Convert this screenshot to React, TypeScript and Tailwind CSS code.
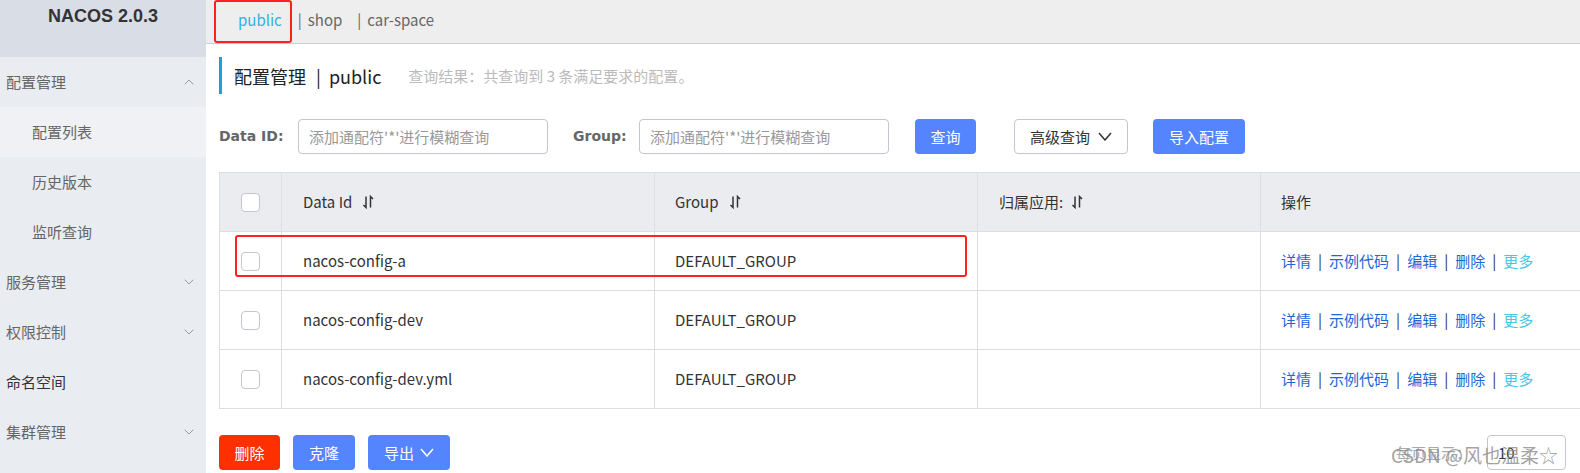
import { ChevronDown, ChevronUp } from "lucide-react"

const rows = [
  { id: "nacos-config-a", group: "DEFAULT_GROUP" },
  { id: "nacos-config-dev", group: "DEFAULT_GROUP" },
  { id: "nacos-config-dev.yml", group: "DEFAULT_GROUP" },
]

const menu = [
  { label: "配置管理", icon: "up" },
  { label: "配置列表", sub: true, active: true },
  { label: "历史版本", sub: true },
  { label: "监听查询", sub: true },
  { label: "服务管理", icon: "down" },
  { label: "权限控制", icon: "down" },
  { label: "命名空间", dark: true },
  { label: "集群管理", icon: "down" },
]

function SortIcon() {
  return (
    <svg width="13" height="14" viewBox="0 0 13 14" className="ml-[10px]" fill="none" stroke="#333" strokeWidth="1.5">
      <path d="M4 1.5 V12.5 L1.5 10" />
      <path d="M8.5 12.5 V1.5 L11 4" />
    </svg>
  )
}

function Caret({ color = "#333" }: { color?: string }) {
  return (
    <svg width="14" height="9" viewBox="0 0 14 9" fill="none" stroke={color} strokeWidth="1.5">
      <path d="M1 1 L7 8 L13 1" />
    </svg>
  )
}

function Checkbox() {
  return <div className="w-[19px] h-[19px] rounded-[4px] border border-[#c4c6cf] bg-white mx-auto" />
}

export default function App() {
  return (
    <div className="w-[1580px] h-[473px] flex overflow-hidden bg-white text-[15px] text-[#333] font-['Noto_Sans_CJK_SC','Noto_Sans',sans-serif]">
      {/* sidebar */}
      <aside className="w-[206px] shrink-0 flex flex-col bg-[#e9ecf1]">
        <div className="h-[57px] bg-[#d9dde5] flex justify-center pt-[6px]">
          <span className="font-['Liberation_Sans',sans-serif] font-bold text-[18px] leading-[20px] text-[#333]">NACOS 2.0.3</span>
        </div>
        {menu.map(m => (
          <div
            key={m.label}
            className={`h-[50px] flex items-center justify-between pr-[9px] ${m.sub ? "pl-[32px]" : "pl-[6px]"} ${m.active ? "bg-[#eff1f5]" : ""}`}
          >
            <span className={`leading-[20px] ${m.dark ? "text-[#333]" : "text-[#666]"}`}>{m.label}</span>
            {m.icon === "up" && <ChevronUp size={16} strokeWidth={1.5} color="#999" />}
            {m.icon === "down" && <ChevronDown size={16} strokeWidth={1.5} color="#999" />}
          </div>
        ))}
      </aside>

      {/* main */}
      <main className="flex-1 min-w-0 flex flex-col overflow-hidden relative">
        <div className="h-[44px] shrink-0 bg-[#eeeeee] border-b border-[#cccccc] flex items-center relative">
          <div className="flex items-center leading-[20px] pb-[4px]">
            <span className="ml-[32px] text-[#2fb3dc]">public</span>
            <span className="ml-[16px] text-[#666]">|</span>
            <span className="ml-[6px] text-[#666]">shop</span>
            <span className="ml-[15px] text-[#666]">|</span>
            <span className="ml-[6px] text-[#666]">car-space</span>
          </div>
          <div className="absolute left-[8px] top-0 w-[78px] h-[43px] border-2 border-[#ff2020] rounded-[3px]" />
        </div>

        <div className="pl-[13px] flex flex-col">
          {/* title */}
          <div className="mt-[13px] h-[37px] border-l-[3px] border-[#1f9fd8] flex items-center">
            <span className="ml-[12px] text-[18px] leading-[22px] text-[#222]">配置管理</span>
            <span className="ml-[10px] text-[18px] leading-[22px] text-[#222]">|</span>
            <span className="ml-[8px] text-[18px] leading-[22px] text-[#222]">public</span>
            <span className="ml-[27px] leading-[20px] text-[#bbbbbb]">查询结果：共查询到 3 条满足要求的配置。</span>
          </div>

          {/* search */}
          <div className="mt-[25px] h-[35px] flex items-center">
            <label className="w-[79px] font-['DejaVu_Sans',sans-serif] font-bold text-[14px] text-[#666]">Data ID:</label>
            <div className="w-[250px] h-[35px] border border-[#c4c6cf] rounded-[4px] flex items-center pl-[10px] text-[#999] leading-[20px]">
              添加通配符'*'进行模糊查询
            </div>
            <label className="ml-[25px] w-[66px] font-['DejaVu_Sans',sans-serif] font-bold text-[14px] text-[#666]">Group:</label>
            <div className="w-[250px] h-[35px] border border-[#c4c6cf] rounded-[4px] flex items-center pl-[10px] text-[#999] leading-[20px]">
              添加通配符'*'进行模糊查询
            </div>
            <button className="ml-[26px] w-[61px] h-[35px] rounded-[4px] bg-[#5584ff] text-white leading-[20px]">查询</button>
            <button className="ml-[38px] w-[114px] h-[35px] rounded-[4px] border border-[#c4c6cf] bg-white flex items-center justify-center gap-[8px] leading-[20px] text-[#333]">
              高级查询 <Caret />
            </button>
            <button className="ml-[25px] w-[92px] h-[35px] rounded-[4px] bg-[#5584ff] text-white leading-[20px]">导入配置</button>
          </div>

          {/* table */}
          <div className="mt-[18px] relative">
            <table className="table-fixed border-collapse w-[1460px]">
              <colgroup>
                <col className="w-[62px]" />
                <col className="w-[373px]" />
                <col className="w-[323px]" />
                <col className="w-[283px]" />
                <col />
              </colgroup>
              <thead>
                <tr className="h-[59px] bg-[#ebecf0]">
                  <th className="border border-[#dcdee3]"><Checkbox /></th>
                  <th className="border border-[#dcdee3] pl-[21px] text-left font-normal">
                    <div className="flex items-center leading-[20px]">Data Id<SortIcon /></div>
                  </th>
                  <th className="border border-[#dcdee3] pl-[20px] text-left font-normal">
                    <div className="flex items-center leading-[20px]">Group<SortIcon /></div>
                  </th>
                  <th className="border border-[#dcdee3] pl-[21px] text-left font-normal">
                    <div className="flex items-center leading-[20px]">归属应用:<span className="-ml-[2px]"><SortIcon /></span></div>
                  </th>
                  <th className="border border-[#dcdee3] pl-[20px] text-left font-normal leading-[20px]">操作</th>
                </tr>
              </thead>
              <tbody>
                {rows.map(r => (
                  <tr key={r.id} className="h-[59px]">
                    <td className="border border-[#dcdee3]"><Checkbox /></td>
                    <td className="border border-[#dcdee3] pl-[21px] leading-[20px]">{r.id}</td>
                    <td className="border border-[#dcdee3] pl-[20px] leading-[20px]">{r.group}</td>
                    <td className="border border-[#dcdee3]" />
                    <td className="border border-[#dcdee3] pl-[20px] leading-[20px]">
                      <span className="text-[#2266d6]">详情</span>
                      <span className="mx-[7px] text-[#333]">|</span>
                      <span className="text-[#2266d6]">示例代码</span>
                      <span className="mx-[7px] text-[#333]">|</span>
                      <span className="text-[#2266d6]">编辑</span>
                      <span className="mx-[7px] text-[#333]">|</span>
                      <span className="text-[#2266d6]">删除</span>
                      <span className="mx-[7px] text-[#333]">|</span>
                      <span className="text-[#45c8e6]">更多</span>
                    </td>
                  </tr>
                ))}
              </tbody>
            </table>
            {/* highlight box on first row */}
            <div className="absolute left-[16px] top-[63px] w-[732px] h-[42px] border-2 border-[#ff2020] rounded-[3px]" />
          </div>

          {/* footer actions */}
          <div className="mt-[26px] h-[35px] flex items-center pr-[14px] relative">
            <button className="w-[61px] h-[35px] rounded-[4px] bg-[#ff3000] text-white leading-[20px]">删除</button>
            <button className="ml-[13px] w-[62px] h-[35px] rounded-[4px] bg-[#5584ff] text-white leading-[20px]">克隆</button>
            <button className="ml-[13px] w-[82px] h-[35px] rounded-[4px] bg-[#5584ff] text-white flex items-center justify-center gap-[6px] leading-[20px]">
              导出 <Caret color="#fff" />
            </button>
            <div className="ml-auto flex items-center">
              <span className="text-[#aaa] leading-[20px] mr-[16px]">每页显示：</span>
              <div className="w-[79px] h-[35px] border border-[#c4c6cf] rounded-[4px] flex items-center pl-[10px] leading-[20px] text-[#333]">10</div>
            </div>
            <span className="absolute left-[1172px] top-[8px] text-[19px] leading-[24px] text-[#8a8a8a]/80 whitespace-nowrap">CSDN @风也温柔☆</span>
          </div>
        </div>
      </main>
    </div>
  )
}
